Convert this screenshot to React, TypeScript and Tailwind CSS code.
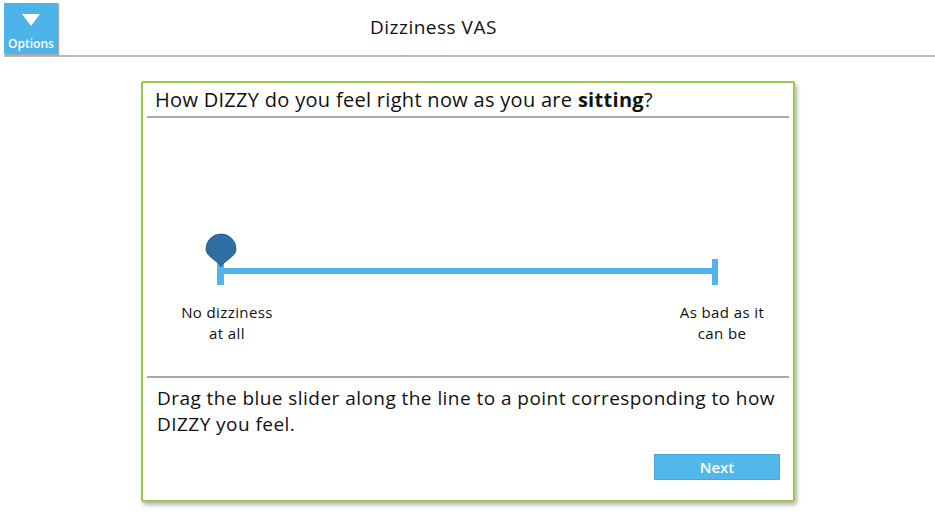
const App: React.FC = () => {
  return (
    <div className="w-[935px] h-[529px] bg-white text-[#111] font-['Open_Sans',sans-serif] overflow-hidden">
      <header className="flex items-end h-[57px] ml-[4px] border-b-2 border-[#b9b9b9]">
        <button className="w-[54px] h-[51px] mb-[1px] bg-[#4db4ea] shadow-[1px_1px_1px_rgba(0,0,0,0.35)] flex flex-col items-center pt-[11px] text-white">
          <svg width="18" height="12" viewBox="0 0 18 12">
            <polygon points="0,0 18,0 9,12" fill="white" />
          </svg>
          <span className="text-[12px] font-semibold leading-none mt-[12px]">Options</span>
        </button>
        <h1 className="ml-[312px] self-center text-[19px] tracking-[0.5px] leading-none mb-[1px]">Dizziness VAS</h1>
      </header>

      <section className="mt-[24px] ml-[141px] w-[654px] h-[421px] border-2 border-[#9cc84c] rounded-[2px] shadow-[2px_3px_4px_rgba(0,0,0,0.3)] flex flex-col px-[4px]">
        <div className="h-[35px] border-b-2 border-[#a9a9a9] pl-[8px] pt-[5px] text-[20px] leading-[24px] tracking-[0.3px]">
          How DIZZY do you feel right now as you are <b className="font-bold">sitting</b>?
        </div>

        <div className="h-[258px] relative">
          <svg className="absolute left-0 top-0" width="646" height="258" viewBox="0 0 646 258">
            <rect x="76" y="150" width="490" height="6" fill="#4fb5ec" />
            <rect x="70" y="142" width="7" height="25" fill="#4fb5ec" />
            <rect x="565" y="141" width="6" height="26" fill="#4fb5ec" />
            <path
              d="M74 149 C72 143 59 139 59 131 A15 15 0 1 1 89 131 C89 139 76 143 74 149 Z"
              fill="#2f6ea1"
              stroke="#285f8c"
              strokeWidth="1"
            />
          </svg>
          <div className="absolute left-[18px] top-[184px] w-[124px] text-center text-[15px] leading-[21px] tracking-[0.4px]">
            No dizziness
            <br />
            at all
          </div>
          <div className="absolute left-[513px] top-[184px] w-[124px] text-center text-[15px] leading-[21px] tracking-[0.4px]">
            As bad as it
            <br />
            can be
          </div>
        </div>

        <div className="border-t-2 border-[#a9a9a9] pl-[10px] pr-[8px] pt-[7px] text-[19px] leading-[26px] tracking-[0.45px]">
          Drag the blue slider along the line to a point corresponding to how DIZZY you feel.
        </div>

        <div className="flex justify-end pr-[9px] mt-[17px]">
          <button className="w-[126px] h-[26px] bg-[#52b8ea] border border-[#4aa6d6] text-white text-[15px] font-semibold leading-none">
            Next
          </button>
        </div>
      </section>
    </div>
  );
};

export default App;
